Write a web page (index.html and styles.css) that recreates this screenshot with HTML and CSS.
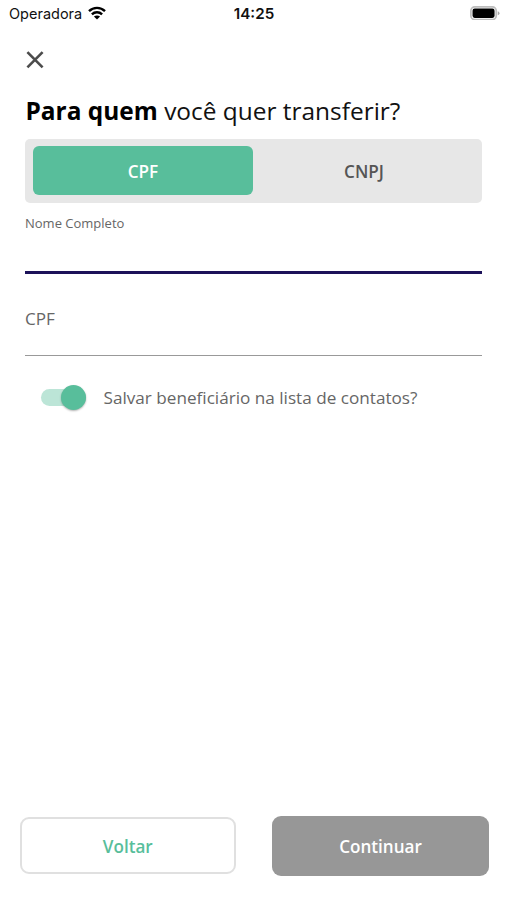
FILE: index.html
```html
<!DOCTYPE html>
<html lang="pt-BR">
<head>
<meta charset="utf-8">
<meta name="viewport" content="width=device-width, initial-scale=1">
<title>Transferir</title>
<link rel="stylesheet" href="styles.css">
</head>
<body>
<div class="screen">
  <header class="status">
    <div class="carrier"><span class="carrier-name">Operadora</span>
      <svg class="wifi" viewBox="0 0 18 14" aria-hidden="true">
        <path d="M1 5.2C5.5.8 12.5.8 17 5.2M3.9 8.3c2.9-2.8 7.3-2.8 10.2 0" fill="none" stroke="#000" stroke-width="2.4"/>
        <path d="M9 13.6 5.9 10.6c1.8-1.5 4.4-1.5 6.2 0z"/>
      </svg>
    </div>
    <span class="time">14:25</span>
    <svg class="battery" viewBox="0 0 31 15" aria-hidden="true">
      <rect x=".9" y=".9" width="26.2" height="13.2" rx="4" fill="#fff" stroke="#bdbdbd" stroke-width="1.8"/>
      <rect x="2.6" y="2.6" width="22.8" height="9.8" rx="2.2"/>
      <path d="M28.7 5.4q1.8.6 1.8 2.1t-1.8 2.1z" fill="#a8a8a8"/>
    </svg>
  </header>
  <main class="content">
    <button class="close" aria-label="Fechar">
      <svg viewBox="0 0 18 18"><path d="M1.4 1.2l15.2 15.2m0-15.2l-15.2 15.2" fill="none" stroke="#4c4c4c" stroke-width="2.6"/></svg>
    </button>
    <h1 class="title"><b>Para quem</b> você quer transferir?</h1>
    <div class="segments">
      <button class="segment active">CPF</button>
      <button class="segment">CNPJ</button>
    </div>
    <div class="field focused"><span class="label">Nome Completo</span></div>
    <div class="field document"><span class="label">CPF</span></div>
    <div class="save">
      <span class="switch"><span class="thumb"></span></span>
      <span class="save-text">Salvar beneficiário na lista de contatos?</span>
    </div>
  </main>
  <footer class="actions">
    <button class="action back">Voltar</button>
    <button class="action next">Continuar</button>
  </footer>
</div>
</body>
</html>
```
FILE: styles.css
```css
* { box-sizing: border-box; }
body { margin: 0; background: #fff; font-family: "Open Sans", sans-serif; }
button { font: inherit; border: 0; padding: 0; background: none; }
svg { display: block; }
.screen { height: 900px; display: flex; flex-direction: column; overflow: hidden; }
.status { height: 28px; padding: 0 7px 0 9px; display: grid; grid-template-columns: 1fr auto 1fr; align-items: center; font-family: Inter, sans-serif; color: #111; }
.carrier { display: flex; align-items: center; gap: 6px; font-size: 14.5px; line-height: 18px; }
.wifi { width: 18px; height: 14px; margin-top: -3px; }
.time { font-size: 15.2px; font-weight: 600; line-height: 18px; margin-right: 1px; }
.battery { width: 30px; height: 14.5px; justify-self: end; margin-top: -2px; }
.content { flex: 1; padding: 0 25px; }
.close { display: block; width: 18px; height: 18px; margin: 23px 0 0 1px; }
.title { margin: 24px 0 0; height: 46px; font-size: 24.45px; line-height: 36px; font-weight: 400; color: #111; white-space: nowrap; padding-left: .5px; }
.title b { font-weight: 700; color: #000; }
.segments { width: 457px; height: 63.5px; padding: 7px 7.5px; display: grid; grid-template-columns: 220px 1fr; background: #e7e7e7; border-radius: 5px; }
.segment { height: 49px; border-radius: 6px; font-size: 17.1px; font-weight: 600; color: #555; padding: 1px 0 0 1px; }
.segment.active { background: #58be9b; color: #fff; }
.field { width: 457px; color: #666; }
.focused { height: 71.5px; padding-top: 11px; border-bottom: 3px solid #1c1259; font-size: 13px; line-height: 18px; }
.document { height: 82px; padding-top: 33px; border-bottom: 1px solid #999; font-size: 17.1px; line-height: 24px; }
.label { display: block; }
.save { height: 26px; margin: 28px 0 0 16px; display: flex; align-items: center; gap: 18px; }
.switch { width: 44.5px; height: 17px; border-radius: 9px; background: #bce5d7; display: flex; align-items: center; justify-content: flex-end; }
.thumb { width: 25px; height: 25px; border-radius: 50%; background: #58be9b; box-shadow: 0 1px 2px rgba(0,0,0,.3); }
.save-text { font-size: 17.15px; line-height: 24px; color: #666; white-space: nowrap; padding-top: 1px; }
.actions { height: 84px; padding: 0 18px 0 20px; display: flex; justify-content: space-between; align-items: flex-start; }
.action { font-size: 17.1px; font-weight: 600; }
.back { width: 215.5px; height: 57px; margin-top: 1px; padding-top: 1px; border: 2px solid #e0e0e0; border-radius: 9px; color: #58be9b; }
.next { width: 217px; height: 60px; border-radius: 9px; background: #979797; color: #fff; }
```
